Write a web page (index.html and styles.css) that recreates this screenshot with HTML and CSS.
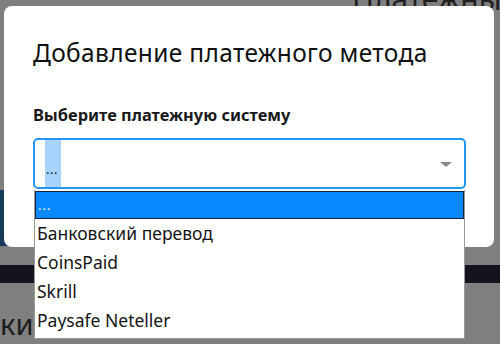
FILE: index.html
```html
<!DOCTYPE html>
<html lang="ru">
  <head>
    <meta charset="UTF-8" />
    <meta name="viewport" content="width=device-width, initial-scale=1.0" />
    <title>Добавление платежного метода</title>
    <link rel="stylesheet" href="styles.css">
  </head>
  <body>
    <div class="page">
      <div class="page-header">
        <div class="page-mark"></div>
        <div class="page-title">Платежные</div>
      </div>
      <div class="page-side"></div>
      <div class="page-bar"></div>
      <div class="page-sub">ки п</div>
    </div>

    <div class="modal">
      <div class="modal-title">Добавление платежного метода</div>
      <div class="field-label">Выберите платежную систему</div>
      <div class="select">
        <span class="select-value">...</span>
        <span class="select-arrow"></span>
      </div>
    </div>

    <div class="listbox">
      <div class="option selected">...</div>
      <div class="option">Банковский перевод</div>
      <div class="option">CoinsPaid</div>
      <div class="option">Skrill</div>
      <div class="option">Paysafe Neteller</div>
    </div>
  </body>
</html>
```

FILE: styles.css
```css
body {
  margin: 0;
  font-family: "Noto Sans", "DejaVu Sans", sans-serif;
  background: #7f7f7f;
  color: #1c1c1c;
  width: 500px;
  height: 344px;
  overflow: hidden;
  position: relative;
}

.page {
  display: flex;
  flex-direction: column;
}

.page-header {
  display: flex;
  align-items: flex-end;
  height: 10px;
  padding-left: 330px;
  gap: 22px;
}

.page-mark {
  width: 20px;
  height: 14px;
  background: #161616;
  align-self: flex-end;
}

.page-title {
  font-size: 30px;
  line-height: 30px;
  color: #202020;
  margin-bottom: -4px;
  white-space: nowrap;
}

.page-side {
  margin-top: 180px;
  width: 30px;
  height: 56px;
  background: #163a5b;
}

.page-bar {
  margin-top: 19px;
  height: 18px;
  background: #15141c;
}

.page-sub {
  margin-top: 25px;
  width: 34px;
  overflow: hidden;
  font-size: 29px;
  line-height: 32px;
  color: #1c1c1c;
  white-space: nowrap;
}

.modal {
  position: absolute;
  top: 6px;
  left: 4px;
  width: 490px;
  height: 241px;
  box-sizing: border-box;
  background: #fff;
  border-radius: 8px;
  padding: 30px 28px 0 29px;
}

.modal-title {
  font-size: 24.5px;
  line-height: 34px;
  color: #111;
  letter-spacing: 0.35px;
}

.field-label {
  margin-top: 34px;
  font-size: 16.4px;
  font-weight: 700;
  line-height: 21px;
  color: #1a1a1a;
}

.select {
  margin-top: 13px;
  height: 51px;
  box-sizing: border-box;
  border: 2px solid #2196f3;
  border-radius: 5px;
  display: flex;
  align-items: stretch;
  justify-content: space-between;
  padding: 0 12px 0 10px;
}

.select-value {
  background: #a8d3fd;
  width: 15px;
  font-size: 13px;
  line-height: 58px;
  padding-left: 1px;
  letter-spacing: 0.5px;
  color: #111;
}

.select-arrow {
  align-self: center;
  width: 0;
  height: 0;
  border-left: 6px solid transparent;
  border-right: 6px solid transparent;
  border-top: 5px solid #8a8a8a;
  margin-top: 2px;
}

.listbox {
  position: absolute;
  top: 190px;
  left: 34px;
  width: 431px;
  height: 149px;
  box-sizing: border-box;
  background: #fff;
  border: 1px solid #9a9a9a;
  border-top: none;
  display: flex;
  flex-direction: column;
}

.option {
  height: 29px;
  line-height: 29px;
  padding-left: 2px;
  font-size: 17.5px;
  color: #151515;
  white-space: nowrap;
}

.option.selected {
  height: 28px;
  line-height: 26px;
  box-sizing: border-box;
  background: #0a89ff;
  border: 1px solid #14223a;
  color: #fff;
  font-size: 13px;
  letter-spacing: 1px;
  margin-top: 1px;
}
```
